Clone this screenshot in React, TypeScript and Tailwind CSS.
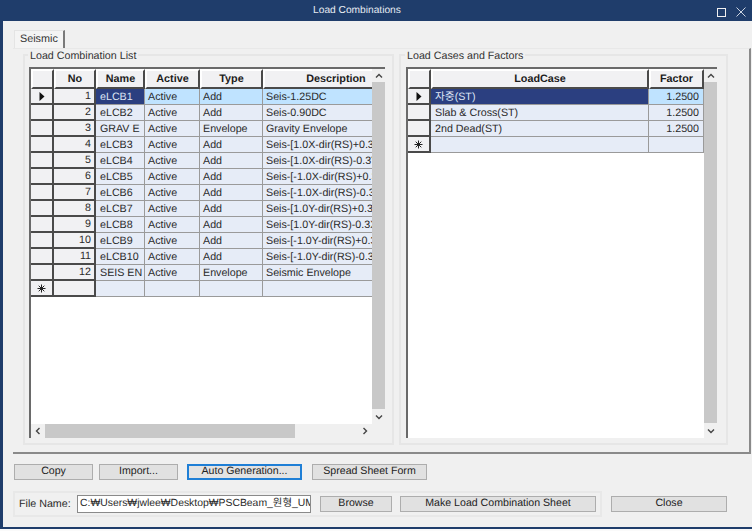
import React from "react";

const rows = [
  ["1", "eLCB1", "Active", "Add", "Seis-1.25DC"],
  ["2", "eLCB2", "Active", "Add", "Seis-0.90DC"],
  ["3", "GRAV E", "Active", "Envelope", "Gravity Envelope"],
  ["4", "eLCB3", "Active", "Add", "Seis-[1.0X-dir(RS)+0.3Y-dir(RS)]"],
  ["5", "eLCB4", "Active", "Add", "Seis-[1.0X-dir(RS)-0.3Y-dir(RS)]"],
  ["6", "eLCB5", "Active", "Add", "Seis-[-1.0X-dir(RS)+0.3Y-dir(RS)]"],
  ["7", "eLCB6", "Active", "Add", "Seis-[-1.0X-dir(RS)-0.3Y-dir(RS)]"],
  ["8", "eLCB7", "Active", "Add", "Seis-[1.0Y-dir(RS)+0.3X-dir(RS)]"],
  ["9", "eLCB8", "Active", "Add", "Seis-[1.0Y-dir(RS)-0.3X-dir(RS)]"],
  ["10", "eLCB9", "Active", "Add", "Seis-[-1.0Y-dir(RS)+0.3X-dir(RS)]"],
  ["11", "eLCB10", "Active", "Add", "Seis-[-1.0Y-dir(RS)-0.3X-dir(RS)]"],
  ["12", "SEIS EN", "Active", "Envelope", "Seismic Envelope"],
  ["", "", "", "", ""],
];
const cases = [
  ["자중(ST)", "1.2500"],
  ["Slab & Cross(ST)", "1.2500"],
  ["2nd Dead(ST)", "1.2500"],
  ["", ""],
];

function Hdr({ w, children, grow }: { w?: string; children?: React.ReactNode; grow?: boolean }) {
  return (
    <div className={`${w ?? ""} ${grow ? "flex-1" : "shrink-0"} h-full pt-[1px] bg-[#f1f1f3] border-l-2 border-t-2 border-l-white border-t-white border-r-2 border-b-2 border-r-[#4a4a4a] border-b-[#4a4a4a] flex items-center justify-center font-bold text-[#1c1c1c] text-[10.8px]`}>
      {children}
    </div>
  );
}

function RowHead({ kind }: { kind: "arrow" | "star" | "none" }) {
  return (
    <div className="w-[23px] shrink-0 h-full bg-[#f1f1f3] border-r-2 border-b-2 border-r-[#4a4a4a] border-b-[#4a4a4a] flex items-center justify-center">
      {kind === "arrow" && (
        <svg width="6" height="9" viewBox="0 0 6 9"><path d="M0.5 0 L5.5 4.5 L0.5 9 Z" fill="#111" /></svg>
      )}
      {kind === "star" && (
        <svg width="9" height="9" viewBox="0 0 9 9" stroke="#222" strokeWidth="1"><path d="M4.5 0.5 V8.5 M0.5 4.5 H8.5 M1.7 1.7 L7.3 7.3 M7.3 1.7 L1.7 7.3" /></svg>
      )}
    </div>
  );
}

function Cell({ w, className, children, grow, pad }: { w?: string; className?: string; children?: React.ReactNode; grow?: boolean; pad?: string }) {
  return (
    <div className={`${w ?? ""} ${grow ? "flex-1" : "shrink-0"} ${pad ?? "pl-[3px]"} h-full pt-[1px] overflow-hidden whitespace-nowrap flex items-center border-r border-b border-[#9a9a9a] ${className ?? "bg-[#e6ecf7]"}`}>
      {children}
    </div>
  );
}

function Chevron({ d }: { d: string }) {
  return (
    <svg width="8" height="8" viewBox="0 0 8 8" fill="none" stroke="#444" strokeWidth="1.4">
      <path d={d} />
    </svg>
  );
}

function VBar({ corner }: { corner?: boolean }) {
  return (
    <div className="w-[13px] shrink-0 bg-[#f0f0f0] flex flex-col items-center">
      <div className="h-[13px] shrink-0 flex items-center justify-center"><Chevron d="M1 5.5 L4 2.5 L7 5.5" /></div>
      <div className="w-full flex-1 bg-[#c8c8c8]" />
      <div className="h-[15px] shrink-0 flex items-center justify-center"><Chevron d="M1 2.5 L4 5.5 L7 2.5" /></div>
      {corner && <div className="h-[14px] shrink-0 w-full bg-[#f0f0f0]" />}
    </div>
  );
}

function Btn({ w, children, focus }: { w: string; children: React.ReactNode; focus?: boolean }) {
  return (
    <div className={`${w} h-[16px] shrink-0 flex items-center justify-center text-[#222] text-[10.6px] ${focus ? "bg-[#e3e3e3] border-2 border-[#1f7fd6]" : "bg-[#e1e1e1] border border-[#adadad]"}`}>
      {children}
    </div>
  );
}

function Group({ title, className, left, children }: { title: string; className: string; left: string; children: React.ReactNode }) {
  return (
    <div className={`${className} relative border-2 border-[#e6e6e6] h-full pl-[4px] pt-[11px]`}>
      <span className={`absolute ${left} -top-[6px] bg-[#f0f0f0] px-[2px] leading-[13px] text-[#333]`}>{title}</span>
      {children}
    </div>
  );
}

export default function App() {
  return (
    <div className="font-[Arial,Liberation_Sans,Noto_Sans_CJK_KR,sans-serif] [text-rendering:geometricPrecision] w-[752px] h-[531px] bg-[#fafafa] text-[10.7px] text-[#2a2a2a] overflow-hidden">
      <div className="h-[529px] border-l-[3px] border-b-[2px] border-[#1f3d6b] bg-[#f0f0f0] flex flex-col">
        <div className="h-[21px] shrink-0 -ml-[3px] bg-[#1f3d6b] flex items-center relative">
          <div className="flex-1 text-center text-[#e6ebf2] text-[10.2px] pr-[38px]">Load Combinations</div>
          <div className="absolute right-[6px] top-[7px] flex items-center gap-[10px]">
            <div className="w-[9px] h-[9px] border border-[#f0f0f0]" />
            <svg width="10" height="10" viewBox="0 0 10 10" stroke="#dfe5ee" strokeWidth="0.9"><path d="M0.5 0.5 L9.5 9.5 M9.5 0.5 L0.5 9.5" /></svg>
          </div>
        </div>

        <div className="pl-[11px] pt-[9px] h-[27px] shrink-0 flex">
          <div className="w-[51px] h-[18px] bg-[#f4f4f4] border-l border-t border-[#e4e4e4] border-r-2 border-r-[#7a7a7a] flex items-center pl-[5px] pb-[1px] text-[#333] text-[10.8px]">Seismic</div>
        </div>

        <div className="w-[738px] ml-[10px] h-[406px] shrink-0 border-r-2 border-b-2 border-[#8a8a8a] border-t border-t-[#e8e8e8] pl-[10px] pr-[11px] pt-[5px] pb-[7px] flex gap-[5px]">
          <Group title="Load Combination List" className="w-[371px]" left="left-[3px]">
            <div className="w-[356px] h-[371px] border-l-2 border-t-2 border-[#6a6a6a] flex">
              <div className="flex-1 min-w-0 bg-white flex flex-col overflow-hidden">
                <div className="flex-1 overflow-hidden">
                  <div className="flex h-[20px] w-[378px]">
                    <Hdr w="w-[23px]" />
                    <Hdr w="w-[42px]">No</Hdr>
                    <Hdr w="w-[49px]">Name</Hdr>
                    <Hdr w="w-[55px]">Active</Hdr>
                    <Hdr w="w-[63px]">Type</Hdr>
                    <Hdr grow>Description</Hdr>
                  </div>
                  {rows.map((r, i) => (
                    <div key={i} className="flex h-[16px] w-[378px]">
                      <RowHead kind={i === 0 ? "arrow" : i === 12 ? "star" : "none"} />
                      <div className="w-[42px] shrink-0 h-full pt-[1px] bg-[#f1f1f3] border-r-2 border-b-2 border-r-[#4a4a4a] border-b-[#4a4a4a] flex items-center justify-end pr-[3px]">{r[0]}</div>
                      <Cell w="w-[49px]" pad="pl-[4px]" className={i === 0 ? "bg-[#2b3f80] text-[#dfe6f5]" : "bg-[#e6ecf7]"}>{r[1]}</Cell>
                      <Cell w="w-[55px]" className={i === 0 ? "bg-[#bfe3ff]" : "bg-[#e6ecf7]"}>{r[2]}</Cell>
                      <Cell w="w-[63px]" className={i === 0 ? "bg-[#bfe3ff]" : "bg-[#e6ecf7]"}>{r[3]}</Cell>
                      <Cell grow className={i === 0 ? "bg-[#bfe3ff]" : "bg-[#e6ecf7]"}>{r[4]}</Cell>
                    </div>
                  ))}
                </div>
                <div className="h-[14px] shrink-0 bg-[#f0f0f0] flex items-center">
                  <div className="w-[14px] shrink-0 flex justify-center"><Chevron d="M5.5 1 L2.5 4 L5.5 7" /></div>
                  <div className="w-[250px] h-full bg-[#c8c8c8]" />
                  <div className="flex-1" />
                  <div className="w-[15px] shrink-0 flex justify-center"><Chevron d="M2.5 1 L5.5 4 L2.5 7" /></div>
                </div>
              </div>
              <VBar corner />
            </div>
          </Group>

          <Group title="Load Cases and Factors" className="w-[329px]" left="left-[4px]">
            <div className="w-[311px] h-[371px] ml-[1px] border-l-2 border-t-2 border-[#6a6a6a] flex">
              <div className="flex-1 min-w-0 bg-white flex flex-col">
                <div className="flex h-[20px]">
                  <Hdr w="w-[23px]" />
                  <Hdr w="w-[218px]">LoadCase</Hdr>
                  <Hdr grow>Factor</Hdr>
                </div>
                {cases.map((c, i) => (
                  <div key={i} className="flex h-[16px]">
                    <RowHead kind={i === 0 ? "arrow" : i === 3 ? "star" : "none"} />
                    <Cell w="w-[218px]" pad="pl-[4px]" className={i === 0 ? "bg-[#2b3f80] text-[#dfe6f5]" : "bg-[#e6ecf7]"}>{c[0]}</Cell>
                    <Cell grow pad="pr-[4px]" className={`justify-end ${i === 0 ? "bg-[#bfe3ff]" : "bg-[#e6ecf7]"}`}>{c[1]}</Cell>
                  </div>
                ))}
              </div>
              <VBar />
            </div>
          </Group>
        </div>

        <div className="pl-[11px] pt-[10px] h-[27px] shrink-0 flex box-content items-start">
          <Btn w="w-[79px]">Copy</Btn>
          <div className="w-[6px]" />
          <Btn w="w-[79px]">Import...</Btn>
          <div className="w-[9px]" />
          <Btn w="w-[115px]" focus>Auto Generation...</Btn>
          <div className="w-[10px]" />
          <Btn w="w-[115px]">Spread Sheet Form</Btn>
        </div>

        <div className="pl-[10px] flex items-center">
          <div className="w-[589px] h-[26px] border-2 border-[#e8e8e8] flex items-center pl-[4px]">
            <span className="w-[58px] text-[#2a2a2a] shrink-0">File Name:</span>
            <div className="w-[234px] h-[18px] bg-white border border-[#8a8a8a] shrink-0 overflow-hidden whitespace-nowrap px-[2px] leading-[15px] text-[10.4px]">C:₩Users₩jwlee₩Desktop₩PSCBeam_원형_UM</div>
            <div className="w-[9px]" />
            <Btn w="w-[72px]">Browse</Btn>
            <div className="w-[8px]" />
            <Btn w="w-[196px]">Make Load Combination Sheet</Btn>
          </div>
          <div className="w-[9px]" />
          <Btn w="w-[116px]">Close</Btn>
        </div>
      </div>
    </div>
  );
}
